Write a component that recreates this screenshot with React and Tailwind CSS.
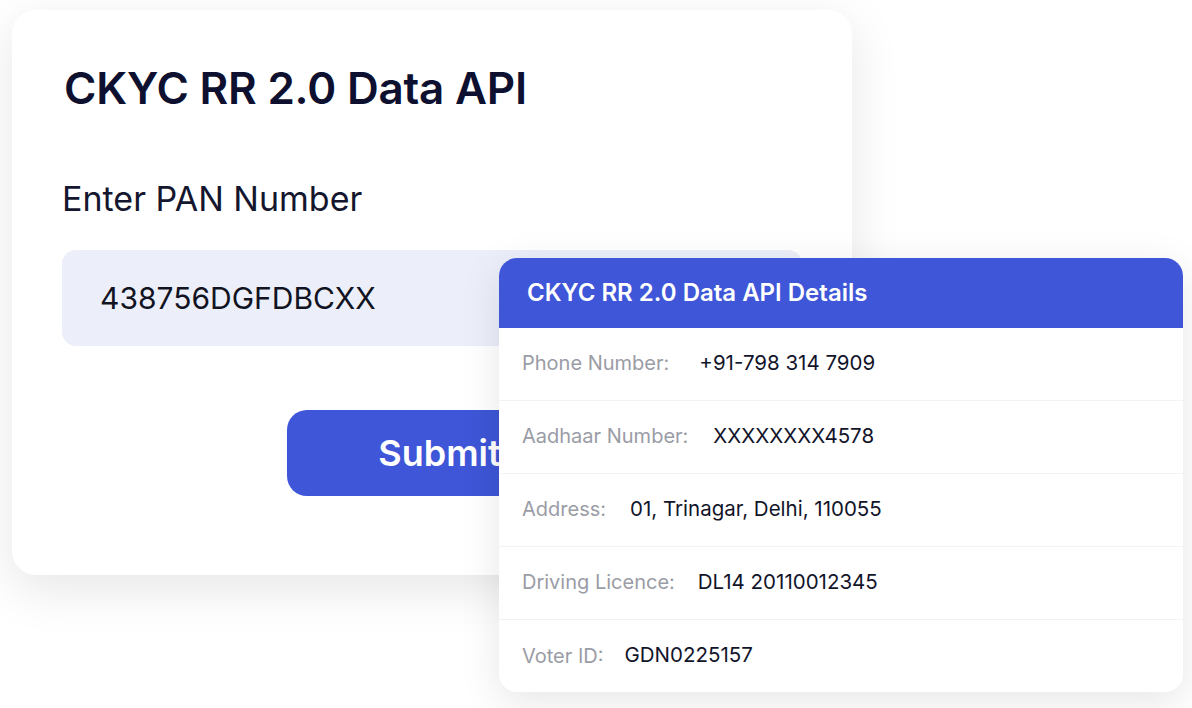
import React from "react";

const detalhes = [
  { label: "Phone Number:", valor: "+91-798 314 7909", gap: "gap-[30px]" },
  { label: "Aadhaar Number:", valor: "XXXXXXXX4578", gap: "gap-[25px]" },
  { label: "Address:", valor: "01, Trinagar, Delhi, 110055", gap: "gap-[24px]" },
  { label: "Driving Licence:", valor: "DL14 20110012345", gap: "gap-[23px]" },
  { label: "Voter ID:", valor: "GDN0225157", gap: "gap-[21px]" },
];

const App = () => {
  return (
    <div
      className="relative w-full h-[708px] bg-white overflow-hidden"
      style={{ fontFamily: "Inter, 'Noto Sans', sans-serif" }}
    >
      <div className="ml-[12px] mt-[10px] w-[840px] h-[565px] bg-white rounded-[24px] shadow-[0_14px_50px_rgba(0,0,0,0.10)] px-[50px] pt-[50px]">
        <h1 className="ml-[2px] text-[44px] leading-[56px] font-semibold text-[#0e1030] tracking-[-0.2px]">
          CKYC RR 2.0 Data API
        </h1>
        <p className="mt-[62px] text-[34px] leading-[42px] text-[#14162e]">
          Enter PAN Number
        </p>
        <div className="mt-[30px] h-[96px] rounded-[14px] bg-[#eceffa] flex items-center px-[38px]">
          <span className="text-[30px] text-[#111322]">438756DGFDBCXX</span>
        </div>
        <div className="flex mt-[64px] ml-[225px]">
          <button className="w-[305px] h-[86px] rounded-[20px] bg-[#3e56d7] text-white text-[36px] font-semibold">
            Submit
          </button>
        </div>
      </div>

      <div className="absolute left-[499px] top-[258px] w-[684px] h-[434px] bg-white rounded-[18px] overflow-hidden shadow-[0_10px_40px_rgba(0,0,0,0.10)]">
        <div className="h-[70px] bg-[#3e56d7] flex items-center px-[28px]">
          <span className="text-white text-[24px] font-semibold">
            CKYC RR 2.0 Data API Details
          </span>
        </div>
        <ul>
          {detalhes.map((item, i) => (
            <li
              key={item.label}
              className={
                "h-[73px] flex items-center px-[23px] text-[20px] pb-[2px] " +
                item.gap +
                (i < detalhes.length - 1 ? " border-b border-[#f3f3f5]" : "")
              }
            >
              <span className="text-[#9a9ca6]">{item.label}</span>
              <span className="text-[#12142a] text-[20.5px]">{item.valor}</span>
            </li>
          ))}
        </ul>
      </div>
    </div>
  );
};

export default App;
